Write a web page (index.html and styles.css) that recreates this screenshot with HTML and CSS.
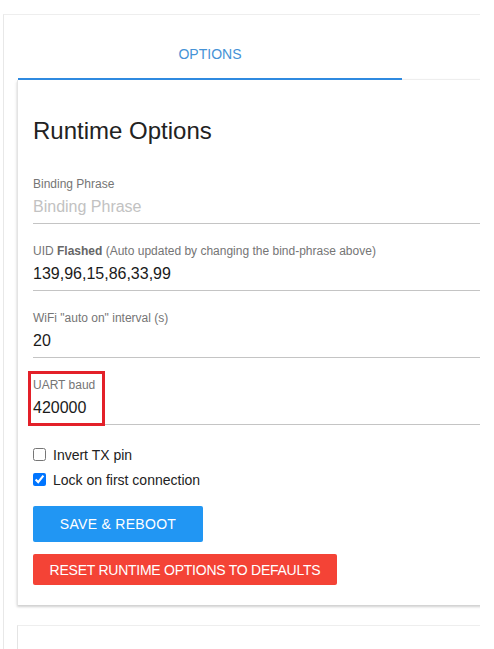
FILE: index.html
```html
<!DOCTYPE html>
<html>
<head>
<meta charset="utf-8">
<link rel="stylesheet" href="styles.css">
</head>
<body>
<div class="viewport">
  <div class="page">
    <div class="tabs">
      <div class="tab active">OPTIONS</div>
      <div class="tab-rest"></div>
    </div>
    <div class="card">
      <h2 class="title">Runtime Options</h2>
      <div class="field">
        <label class="label">Binding Phrase</label>
        <div class="value placeholder">Binding Phrase</div>
      </div>
      <div class="field">
        <label class="label">UID <b>Flashed</b> (Auto updated by changing the bind-phrase above)</label>
        <div class="value">139,96,15,86,33,99</div>
      </div>
      <div class="field">
        <label class="label">WiFi "auto on" interval (s)</label>
        <div class="value">20</div>
      </div>
      <div class="field">
        <div class="highlight">
          <label class="label">UART baud</label>
          <div class="value">420000</div>
        </div>
      </div>
      <div class="checks">
        <label class="check"><input type="checkbox"> Invert TX pin</label>
        <label class="check"><input type="checkbox" checked> Lock on first connection</label>
      </div>
      <div class="buttons">
        <button class="btn btn-save">SAVE &amp; REBOOT</button>
        <button class="btn btn-reset">RESET RUNTIME OPTIONS TO DEFAULTS</button>
      </div>
    </div>
    <div class="card card-next"></div>
  </div>
</div>
</body>
</html>
```

FILE: styles.css
```css
* { box-sizing: border-box; }
html, body { margin: 0; padding: 0; background: #fff; }
body { font-family: "Liberation Sans", Arial, sans-serif; color: #212121; }

.viewport {
  width: 480px;
  height: 649px;
  overflow: hidden;
  padding-top: 14px;
  padding-left: 3px;
}

.page {
  width: 560px;
  border-top: 1px solid #eeeeee;
  border-left: 1px solid #e8e8e8;
  padding-left: 13px;
  height: 700px;
}

.tabs {
  display: flex;
  height: 65px;
}
.tab {
  width: 384px;
  display: flex;
  align-items: center;
  justify-content: center;
  font-size: 14px;
  color: #4592d6;
  border-bottom: 2px solid #2f8ae0;
  padding-top: 14px;
  margin-left: 1px;
}
.tab-rest {
  flex: 1;
  border-bottom: 1px solid #eeeeee;
}

.card {
  border-left: 1px solid #e4e4e4;
  box-shadow: 0 2px 2px rgba(0,0,0,0.14), 0 1px 4px rgba(0,0,0,0.08);
  padding: 37px 16px 20px 15px;
  height: 525px;
}

.title {
  margin: 0 0 32px 0;
  font-size: 24px;
  font-weight: normal;
  color: #222;
  line-height: 28px;
}

.field {
  border-bottom: 1px solid #c4c4c4;
  width: 447px;
  height: 67px;
  display: flex;
  flex-direction: column;
  justify-content: flex-end;
  padding-bottom: 6px;
}
.field:first-of-type { height: auto; }

.label {
  font-size: 12px;
  color: #757575;
  line-height: 14px;
}
.label b { font-weight: bold; color: #666; }

.value {
  font-size: 16px;
  line-height: 20px;
  margin-top: 6px;
  color: #1a1a1a;
}
.placeholder { color: #c2c2c2; }

.highlight {
  display: inline-flex;
  flex-direction: column;
  align-self: flex-start;
  border: 3px solid #e32029;
  margin: 0 0 -8px -5px;
  padding: 4px 7px 5px 2px;
}

.checks {
  display: flex;
  flex-direction: column;
  gap: 6px;
  margin-top: 20px;
}
.check {
  display: flex;
  align-items: center;
  font-size: 14px;
  color: #222;
  height: 19px;
}
.check input {
  margin: 0 7px 0 0;
  width: 13px;
  height: 13px;
  accent-color: #0075ff;
}

.buttons {
  display: flex;
  flex-direction: column;
  align-items: flex-start;
  gap: 12px;
  margin-top: 17px;
}
.btn {
  border: none;
  border-radius: 2px;
  color: #fff;
  font-family: "Liberation Sans", Arial, sans-serif;
  font-size: 14px;
  cursor: pointer;
}
.btn-save {
  background: #2196f3;
  width: 170px;
  height: 36px;
  letter-spacing: 0.3px;
}
.btn-reset {
  background: #f44336;
  width: 304px;
  height: 31px;
  letter-spacing: -0.25px;
}

.card-next {
  margin-top: 20px;
  height: 60px;
  border-top: 1px solid #eee;
  box-shadow: none;
}
```
